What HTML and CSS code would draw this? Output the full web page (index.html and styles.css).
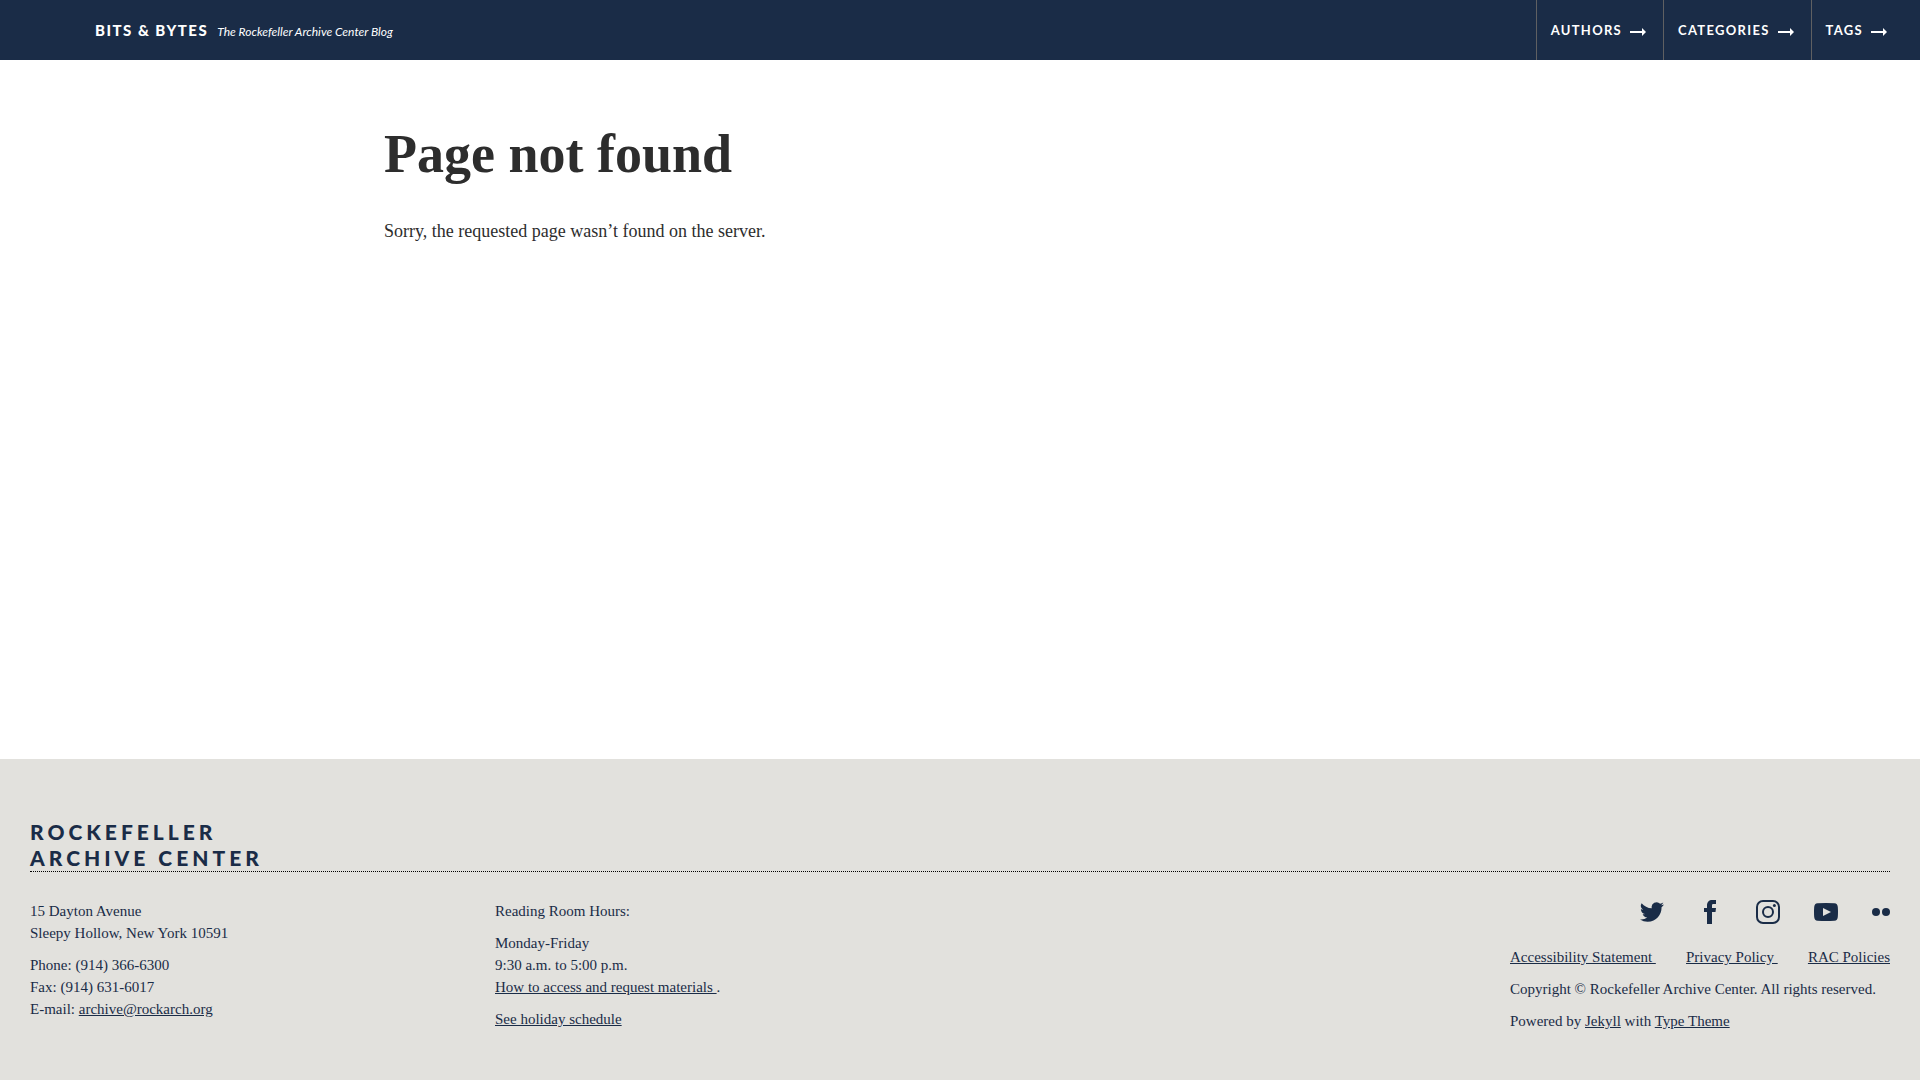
FILE: index.html
```html
<!DOCTYPE html>
<html lang="en">
<head>
<meta charset="utf-8">
<meta name="viewport" content="width=device-width, initial-scale=1">
<title>Page not found</title>
<link rel="stylesheet" href="styles.css">
</head>
<body>
<header class="site-header">
  <div class="brand">
    <a class="brand-name" href="#">BITS &amp; BYTES</a>
    <span class="brand-tagline">The Rockefeller Archive Center Blog</span>
  </div>
  <nav class="site-nav">
    <a href="#">AUTHORS <svg class="arrow" viewBox="0 0 16 8"><path d="M0 3h12V0l4 4-4 4V5H0z"/></svg></a>
    <a href="#">CATEGORIES <svg class="arrow" viewBox="0 0 16 8"><path d="M0 3h12V0l4 4-4 4V5H0z"/></svg></a>
    <a href="#">TAGS <svg class="arrow" viewBox="0 0 16 8"><path d="M0 3h12V0l4 4-4 4V5H0z"/></svg></a>
  </nav>
</header>
<main class="content">
  <h1>Page not found</h1>
  <p>Sorry, the requested page wasn’t found on the server.</p>
</main>
<footer class="site-footer">
  <h2 class="footer-title">ROCKEFELLER<br>ARCHIVE CENTER</h2>
  <div class="footer-columns">
    <div class="footer-column">
      <p>15 Dayton Avenue<br>Sleepy Hollow, New York 10591</p>
      <p>Phone: (914) 366-6300<br>Fax: (914) 631-6017<br>E-mail: <a href="#">archive@rockarch.org</a></p>
    </div>
    <div class="footer-column">
      <p>Reading Room Hours:</p>
      <p>Monday-Friday<br>9:30 a.m. to 5:00 p.m.<br><a href="#">How to access and request materials&nbsp;</a>.</p>
      <p><a href="#">See holiday schedule</a></p>
    </div>
    <div class="footer-legal">
      <div class="social">
        <a href="#" aria-label="Twitter"><svg viewBox="0 0 24 24"><path d="M23.95 4.57a10 10 0 0 1-2.82.77 4.96 4.96 0 0 0 2.16-2.72c-.95.55-2 .95-3.13 1.18a4.92 4.92 0 0 0-8.38 4.48C7.69 8.09 4.07 6.13 1.64 3.16a4.92 4.92 0 0 0 1.52 6.57 4.9 4.9 0 0 1-2.23-.61v.06c0 2.38 1.7 4.37 3.95 4.82a5 5 0 0 1-2.21.08 4.94 4.94 0 0 0 4.6 3.42A9.87 9.87 0 0 1 0 19.54a14 14 0 0 0 7.55 2.21c9.05 0 14-7.5 14-13.98 0-.21 0-.42-.02-.63a9.94 9.94 0 0 0 2.46-2.55z"/></svg></a>
        <a href="#" aria-label="Facebook"><svg viewBox="0 0 24 24"><path d="M9 24v-12H6V8h3V5.500C9 2 11 0 14.200 0H18v4h-2.500C14.200 4 14 4.600 14 5.600V8h4l-.5 4H14v12z"/></svg></a>
        <a href="#" aria-label="Instagram"><svg viewBox="0 0 24 24"><rect class="line" x="1" y="1" width="22" height="22" rx="6"/><circle class="line" cx="12" cy="12" r="5"/><circle cx="18.400" cy="5.600" r="1.500"/></svg></a>
        <a href="#" aria-label="YouTube"><svg viewBox="0 0 24 24"><path fill-rule="evenodd" d="M3.500 3.300Q12 2.700 20.500 3.300Q23.500 3.500 23.800 7Q24.200 12 23.800 17Q23.500 20.500 20.500 20.700Q12 21.300 3.500 20.700Q.5 20.500.2 17Q-.2 12 .2 7Q.5 3.500 3.500 3.300zM9 8v8l8-4z"/></svg></a>
        <a href="#" aria-label="Flickr"><svg class="flickr" viewBox="0 0 18 24"><circle cx="4" cy="12" r="4"/><circle cx="14" cy="12" r="4"/></svg></a>
      </div>
      <div class="policies">
        <a href="#">Accessibility Statement&nbsp;</a>
        <a href="#">Privacy Policy&nbsp;</a>
        <a href="#">RAC Policies</a>
      </div>
      <p>Copyright © Rockefeller Archive Center. All rights reserved.</p>
      <p>Powered by <a href="#">Jekyll</a> with <a href="#">Type Theme</a></p>
    </div>
  </div>
</footer>
</body>
</html>
```
FILE: styles.css
```css
* { box-sizing: border-box; }
body {
  margin: 0;
  min-height: 100vh;
  display: flex;
  flex-direction: column;
  background: #fff;
  color: #2d2d2d;
  font-family: "Liberation Serif", serif;
}
a { color: inherit; }
svg { display: block; fill: currentColor; }

.site-header {
  display: flex;
  justify-content: space-between;
  height: 60px;
  padding: 0 16px 0 95px;
  background: #1a2c47;
  color: #fff;
  font-family: Lato, sans-serif;
}
.brand { display: flex; align-items: baseline; gap: 9px; line-height: 60px; }
.brand-name { font-size: 15px; font-weight: 900; letter-spacing: 0.1em; text-decoration: none; }
.brand-tagline { font-size: 12px; font-style: italic; }
.site-nav { display: flex; }
.site-nav a {
  display: flex;
  align-items: center;
  gap: 8px;
  padding: 0 17px 0 14px;
  border-left: 1px solid #5f6062;
  font-size: 13px;
  font-weight: 700;
  letter-spacing: 0.1em;
  text-decoration: none;
}
.arrow { width: 16px; height: 8px; margin-top: 4px; }

.content { flex: 1; width: 60%; margin: 0 auto; padding-top: 64px; }
.content h1 { margin: 0 0 32px; font-size: 54px; line-height: 60px; }
.content p { margin: 0; font-size: 18px; line-height: 30px; }

.site-footer {
  padding: 60px 30px 48px;
  background: #e2e1dd;
  color: #1a2c47;
  font-size: 15px;
  line-height: 22px;
}
.footer-title {
  margin: 0 0 28px;
  border-bottom: 1px dotted #000;
  font-family: Lato, sans-serif;
  font-size: 21px;
  font-weight: 900;
  letter-spacing: 4px;
  line-height: 26px;
}
.footer-columns { display: flex; }
.footer-column { width: 25%; }
.footer-columns p { margin: 0 0 10px; }
.footer-columns p:last-child { margin-bottom: 0; }
.footer-legal { min-width: 380px; margin-left: auto; }
.social { display: flex; justify-content: flex-end; gap: 34px; margin-bottom: 22px; }
.social svg { width: 24px; height: 24px; }
.social .flickr { width: 18px; }
.line { fill: none; stroke: currentColor; stroke-width: 2; }
.policies { display: flex; justify-content: space-between; gap: 28px; margin-bottom: 10px; }
```
